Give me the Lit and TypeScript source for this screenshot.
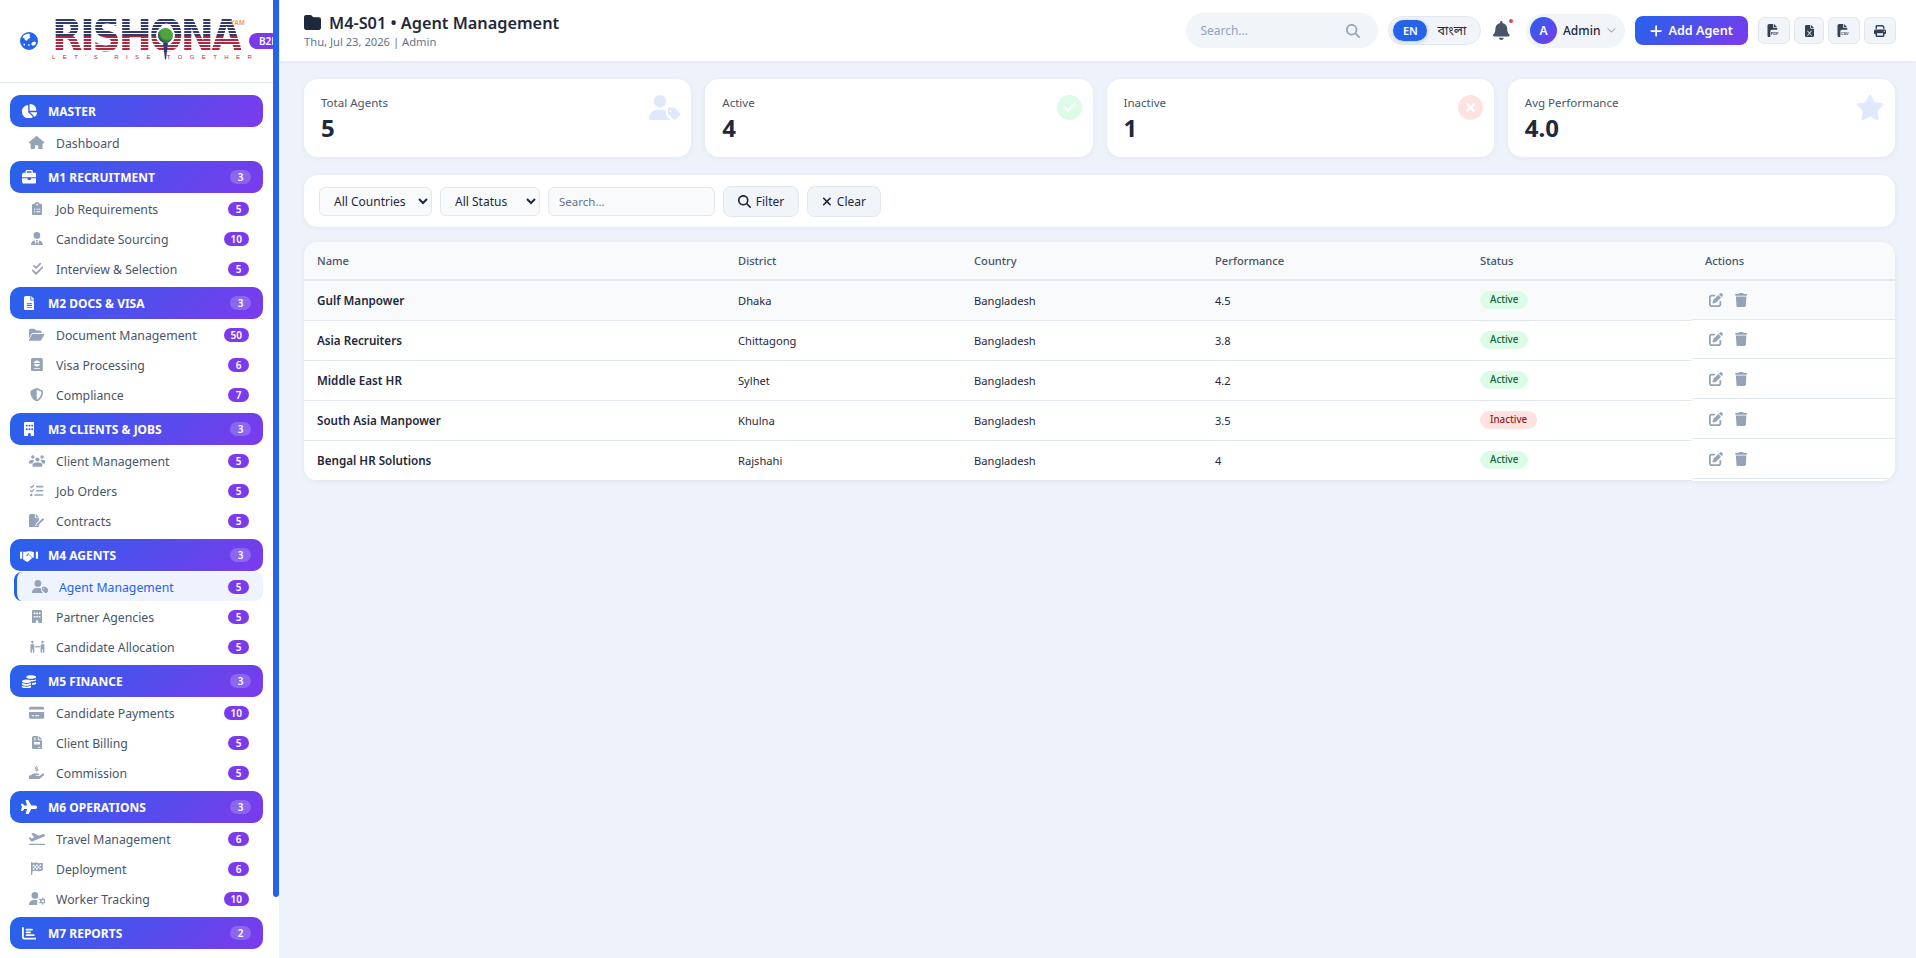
import { LitElement, html, css } from 'lit';
import { customElement } from 'lit/decorators.js';

type Icon = [number, string];

const ICONS: Record<string, Icon> = {
  globe: [512, 'M256 0a256 256 0 1 0 0 512 256 256 0 1 0 0-512zM150 70l90-30 50 30-20 50 30 40-70 40-30 50-60-20-20-60-50 0 20-60 60-40zM340 300l70-30 50 30-30 70-70 20-40-40 20-50zM240 340l40 20-20 40-40-20 20-40zM110 330l40 20-20 40-40-30 20-30z'],
  pie: [576, 'M304 240V16.6c0-9 7-16.6 16-16.6C443.7 0 544 100.3 544 224c0 9-7.6 16-16.6 16H304zM32 272C32 150.7 122.1 50.3 239 34.3c9.2-1.3 17 6.1 17 15.4V288L412.5 444.5c6.7 6.7 6.2 17.7-1.5 23.1C371.8 495.6 323.8 512 272 512C139.5 512 32 404.6 32 272zm526.4 16c9.3 0 16.6 7.8 15.4 17c-7.7 55.9-34.6 105.6-73.9 142.3c-6 5.6-15.4 5.2-21.2-.7L320 288H558.4z'],
  house: [576, 'M575.8 255.5c0 18-15 32.1-32 32.1h-32l.7 160.2c0 2.7-.2 5.4-.5 8.1V472c0 22.1-17.9 40-40 40H456c-1.1 0-2.2 0-3.3-.1c-1.4 .1-2.8 .1-4.2 .1H416 392c-22.1 0-40-17.9-40-40V448 384c0-17.7-14.3-32-32-32H256c-17.7 0-32 14.3-32 32v64 24c0 22.1-17.9 40-40 40H160 128.1c-1.5 0-3-.1-4.5-.2c-1.2 .1-2.4 .2-3.6 .2H104c-22.1 0-40-17.9-40-40V360c0-.9 0-1.9 .1-2.8V287.6H32c-18 0-32-14-32-32.1c0-9 3-17 10-24L266.4 8c7-7 15-8 22-8s15 2 21 7L564.8 231.5c8 7 12 15 11 24z'],
  briefcase: [512, 'M184 48H328c4.4 0 8 3.6 8 8V96H176V56c0-4.4 3.6-8 8-8zm-56 8V96H64C28.7 96 0 124.7 0 160v96H192 320 512V160c0-35.3-28.7-64-64-64H384V56c0-30.9-25.1-56-56-56H184c-30.9 0-56 25.1-56 56zM512 288H320v32c0 17.7-14.3 32-32 32H224c-17.7 0-32-14.3-32-32V288H0V416c0 35.3 28.7 64 64 64H448c35.3 0 64-28.7 64-64V288z'],
  clipboard: [384, 'M192 0c-41.8 0-77.4 26.7-90.5 64H64C28.7 64 0 92.7 0 128V448c0 35.3 28.7 64 64 64H320c35.3 0 64-28.7 64-64V128c0-35.3-28.7-64-64-64H282.5C269.4 26.7 233.8 0 192 0zm0 64a32 32 0 1 1 0 64 32 32 0 1 1 0-64zM72 272a24 24 0 1 1 48 0 24 24 0 1 1 -48 0zm104-16H304c8.8 0 16 7.2 16 16s-7.2 16-16 16H176c-8.8 0-16-7.2-16-16s7.2-16 16-16zM72 368a24 24 0 1 1 48 0 24 24 0 1 1 -48 0zm88 0c0-8.8 7.2-16 16-16H304c8.8 0 16 7.2 16 16s-7.2 16-16 16H176c-8.8 0-16-7.2-16-16z'],
  userTie: [448, 'M96 128a128 128 0 1 0 256 0A128 128 0 1 0 96 128zm94.5 200.2l18.6 31L175.8 483.1l-36-146.9c-2-8.1-9.8-13.4-17.9-11.3C51.9 342.4 0 405.8 0 481.3c0 17 13.8 30.7 30.7 30.7H162.5c0 0 0 0 .1 0H168 280h5.5c0 0 0 0 .1 0H417.3c17 0 30.7-13.8 30.7-30.7c0-75.5-51.9-138.9-121.9-156.4c-8.1-2-15.9 3.3-17.9 11.3l-36 146.9L238.9 359.2l18.6-31c6.4-10.7-1.3-24.2-13.7-24.2H224 204.3c-12.4 0-20.1 13.6-13.7 24.2z'],
  checks: [448, 'M374.6 86.6c12.5-12.5 12.5-32.8 0-45.3s-32.8-12.5-45.3 0L192 178.7l-57.4-57.4c-12.5-12.5-32.8-12.5-45.3 0s-12.5 32.8 0 45.3l80 80c12.5 12.5 32.8 12.5 45.3 0l160-160zm96 128c12.5-12.5 12.5-32.8 0-45.3s-32.8-12.5-45.3 0L192 402.7 86.6 297.4c-12.5-12.5-32.8-12.5-45.3 0s-12.5 32.8 0 45.3l128 128c12.5 12.5 32.8 12.5 45.3 0l256-256z'],
  fileLines: [384, 'M64 0C28.7 0 0 28.7 0 64V448c0 35.3 28.7 64 64 64H320c35.3 0 64-28.7 64-64V160H256c-17.7 0-32-14.3-32-32V0H64zM256 0V128H384L256 0zM112 256H272c8.8 0 16 7.2 16 16s-7.2 16-16 16H112c-8.8 0-16-7.2-16-16s7.2-16 16-16zm0 64H272c8.8 0 16 7.2 16 16s-7.2 16-16 16H112c-8.8 0-16-7.2-16-16s7.2-16 16-16zm0 64H272c8.8 0 16 7.2 16 16s-7.2 16-16 16H112c-8.8 0-16-7.2-16-16s7.2-16 16-16z'],
  folderOpen: [576, 'M88.7 223.8L0 375.8V96C0 60.7 28.7 32 64 32H181.5c17 0 33.3 6.7 45.3 18.7l26.5 26.5c12 12 28.3 18.7 45.3 18.7H416c35.3 0 64 28.7 64 64v32H144c-22.8 0-43.8 12.1-55.3 31.8zm27.6 16.1C122.1 230 132.6 224 144 224H544c11.5 0 22 6.1 27.7 16.1s5.7 22.2-.1 32.1l-112 192C453.9 474 443.4 480 432 480H32c-11.5 0-22-6.1-27.7-16.1s-5.7-22.2 .1-32.1l112-192z'],
  passport: [448, 'M64 0h320c35 0 64 29 64 64v384c0 35-29 64-64 64H64c-35 0-64-29-64-64V64C0 29 29 0 64 0zM224 96a112 112 0 1 0 0 224 112 112 0 1 0 0-224zM120 384c-9 0-16 7-16 16s7 16 16 16h208c9 0 16-7 16-16s-7-16-16-16H120zM116 192h216v32H116z'],
  shield: [512, 'M256 0c4.6 0 9.2 1 13.4 2.9L457.7 82.8c22 9.3 38.4 31 38.3 57.2c-.5 99.2-41.3 280.7-213.6 363.2c-16.7 8-36.1 8-52.8 0C57.3 420.7 16.5 239.2 16 140c-.1-26.2 16.3-47.9 38.3-57.2L242.7 2.9C246.8 1 251.4 0 256 0zm0 66.8V444.8C394 378 431.1 230.1 432 141.4L256 66.8l0 0z'],
  building: [384, 'M48 0C21.5 0 0 21.5 0 48V464c0 26.5 21.5 48 48 48h96V432c0-26.5 21.5-48 48-48s48 21.5 48 48v80h96c26.5 0 48-21.5 48-48V48c0-26.5-21.5-48-48-48H48zM64 240c0-8.8 7.2-16 16-16h32c8.8 0 16 7.2 16 16v32c0 8.8-7.2 16-16 16H80c-8.8 0-16-7.2-16-16V240zm112-16h32c8.8 0 16 7.2 16 16v32c0 8.8-7.2 16-16 16H176c-8.8 0-16-7.2-16-16V240c0-8.8 7.2-16 16-16zm80 16c0-8.8 7.2-16 16-16h32c8.8 0 16 7.2 16 16v32c0 8.8-7.2 16-16 16H272c-8.8 0-16-7.2-16-16V240zM80 96h32c8.8 0 16 7.2 16 16v32c0 8.8-7.2 16-16 16H80c-8.8 0-16-7.2-16-16V112c0-8.8 7.2-16 16-16zm80 16c0-8.8 7.2-16 16-16h32c8.8 0 16 7.2 16 16v32c0 8.8-7.2 16-16 16H176c-8.8 0-16-7.2-16-16V112zM272 96h32c8.8 0 16 7.2 16 16v32c0 8.8-7.2 16-16 16H272c-8.8 0-16-7.2-16-16V112c0-8.8 7.2-16 16-16z'],
  users: [640, 'M144 48a64 64 0 1 1 0 128 64 64 0 1 1 0-128zM496 48a64 64 0 1 1 0 128 64 64 0 1 1 0-128zM320 128a80 80 0 1 1 0 160 80 80 0 1 1 0-160zM0 330c0-60 40-100 90-100h60c20 0 35 5 50 14-40 30-60 70-60 118H20c-11 0-20-9-20-32zM640 330c0 23-9 32-20 32H500c0-48-20-88-60-118 15-9 30-14 50-14h60c50 0 90 40 90 100zM128 448c0-70 50-128 130-128h124c80 0 130 58 130 128 0 18-14 32-32 32H160c-18 0-32-14-32-32z'],
  listCheck: [512, 'M152.1 38.2c9.9 8.9 10.7 24 1.8 33.9l-72 80c-4.4 4.9-10.6 7.8-17.2 7.9s-12.9-2.4-17.6-7L7 113C-2.3 103.6-2.3 88.4 7 79s24.6-9.4 33.9 0l22.1 22.1 55.1-61.2c8.9-9.9 24-10.7 33.9-1.8zm0 160c9.9 8.9 10.7 24 1.8 33.9l-72 80c-4.4 4.9-10.6 7.8-17.2 7.9s-12.9-2.4-17.6-7L7 273c-9.4-9.4-9.4-24.6 0-33.9s24.6-9.4 33.9 0l22.1 22.1 55.1-61.2c8.9-9.9 24-10.7 33.9-1.8zM224 96c0-17.7 14.3-32 32-32H480c17.7 0 32 14.3 32 32s-14.3 32-32 32H256c-17.7 0-32-14.3-32-32zm0 160c0-17.7 14.3-32 32-32H480c17.7 0 32 14.3 32 32s-14.3 32-32 32H256c-17.7 0-32-14.3-32-32zM160 416c0-17.7 14.3-32 32-32H480c17.7 0 32 14.3 32 32s-14.3 32-32 32H192c-17.7 0-32-14.3-32-32zM48 368a48 48 0 1 1 0 96 48 48 0 1 1 0-96z'],
  fileSign: [576, 'M64 0H224V128c0 18 14 32 32 32H384V240L256 368l-16 96 96-16 48-48v48c0 35-29 64-64 64H64c-35 0-64-29-64-64V64C0 29 29 0 64 0zM256 0L384 128H256V0zM560 180c-18-18-46-18-64 0L288 388l-12 60 60-12L548 236l12-12c16-16 16-30 0-44z'],
  handshake: [640, 'M0 136h80v240H0V136zM560 136h80v240h-80V136zM112 136h110l60-24h90l96 32h20v200h-44L304 464l-50 28-36-24-40-8-36-48h-30V136zM290 176l-60 70c-12 14 0 34 20 34l60-40 120 110 12-12-130-120-40 28c-10 6-18-2-12-8l60-62h-30z'],
  userTag: [640, 'M224 0a128 128 0 1 1 0 256 128 128 0 1 1 0-256zM178 304h92c30 0 58 8 82 22v70c0 17 7 33 19 45l71 71H30c-17 0-30-13-30-30 0-98 80-178 178-178zM384 288c0-18 14-32 32-32h86c8 0 16 3 22 9l106 106c12 12 12 33 0 45l-84 84c-12 12-33 12-45 0L395 394c-7-6-11-14-11-22v-84zM440 312a20 20 0 1 0 0 40 20 20 0 1 0 0-40z'],
  peopleArrows: [640, 'M128 32a48 48 0 1 1 0 96 48 48 0 1 1 0-96zM512 32a48 48 0 1 1 0 96 48 48 0 1 1 0-96zM56 160h112c18 0 32 14 32 32v288h-56V352h-32v128H80c-14 0-24-10-24-24V160zM584 160H472c-18 0-32 14-32 32v288h56V352h32v128h32c14 0 24-10 24-24V160zM220 256l60-48v32h80v-32l60 48-60 48v-32h-80v32z'],
  coins: [512, 'M312 40c-80 0-160 24-160 64s80 64 160 64 200-24 200-64-120-64-200-64zM512 170c-30 30-100 46-170 46-30 0-60-3-85-10 30 14 50 34 56 58 80-2 199-24 199-54v-40zM160 192C72 192 0 220 0 256s72 64 160 64 160-28 160-64-72-64-160-64zM0 310v40c0 36 72 64 160 64s160-28 160-64v-40c-30 24-90 40-160 40S30 334 0 310zM0 406v42c0 36 72 64 160 64s160-28 160-64v-42c-30 24-90 40-160 40S30 430 0 406zM352 330v60c70-4 160-24 160-60v-46c-30 24-100 42-160 46z'],
  card: [576, 'M64 32C29 32 0 61 0 96v32h576V96c0-35-29-64-64-64H64zM576 224H0v192c0 35 29 64 64 64h448c35 0 64-29 64-64V224zM112 352h64c9 0 16 7 16 16s-7 16-16 16h-64c-9 0-16-7-16-16s7-16 16-16zm112 16c0-9 7-16 16-16h128c9 0 16 7 16 16s-7 16-16 16H240c-9 0-16-7-16-16z'],
  invoice: [384, 'M64 0C29 0 0 29 0 64v384c0 35 29 64 64 64h256c35 0 64-29 64-64V160H256c-18 0-32-14-32-32V0H64zM256 0v128h128L256 0zM80 64h64c9 0 16 7 16 16s-7 16-16 16H80c-9 0-16-7-16-16s7-16 16-16zm0 64h64c9 0 16 7 16 16s-7 16-16 16H80c-9 0-16-7-16-16s7-16 16-16zM80 224h224v96H80v-96zM240 416h64c9 0 16 7 16 16s-7 16-16 16h-64c-9 0-16-7-16-16s7-16 16-16z'],
  handDollar: [576, 'M0 384c0-18 14-32 32-32h40l46-37c23-18 51-28 80-28h154c18 0 32 14 32 32s-14 32-32 32h-80c-9 0-16 7-16 16s7 16 16 16h121l120-88c18-13 43-9 56 8s9 43-8 56L412 478c-26 19-57 29-89 29H32c-18 0-32-14-32-32v-91zM288 0c-9 0-16 7-16 16v10c-30 5-52 22-52 50 0 34 30 44 56 52 20 6 30 10 30 20 0 8-10 14-24 14-14 0-28-4-42-12l-14 24c14 9 30 14 46 16v10c0 9 7 16 16 16s16-7 16-16v-10c32-5 52-24 52-50 0-36-32-46-58-54-18-6-28-9-28-18 0-6 8-12 22-12 12 0 24 3 36 8l10-26c-10-5-22-8-34-10V16c0-9-7-16-16-16z'],
  plane: [576, 'M482.3 192c34.2 0 93.7 29 93.7 64c0 36-59.5 64-93.7 64l-116.6 0L265.2 495.9c-5.7 10-16.3 16.1-27.8 16.1l-56.2 0c-10.6 0-18.3-10.2-15.4-20.4l49-171.6L112 320 68.8 377.6c-3 4-7.8 6.4-12.8 6.4l-42 0c-7.8 0-14-6.3-14-14c0-1.3 .2-2.6 .5-3.9L32 256 .5 145.9c-.4-1.3-.5-2.6-.5-3.9c0-7.8 6.3-14 14-14l42 0c5 0 9.8 2.4 12.8 6.4L112 192l102.9 0-49-171.6C162.9 10.2 170.6 0 181.2 0l56.2 0c11.5 0 22.1 6.2 27.8 16.1L365.7 192l116.6 0z'],
  planeUp: [640, 'M372 144L173 40c-8-4-17-5-26-2l-41 15c-10 4-14 16-7 25l101 128-100 37-60-37c-6-4-14-4-21-2l-16 6c-9 3-13 14-8 23l54 92c15 27 48 38 77 28l13-5L560 180c30-11 50-40 40-70s-45-40-75-29L372 144zM32 448c-18 0-32 14-32 32s14 32 32 32H608c18 0 32-14 32-32s-14-32-32-32H32z'],
  flag: [448, 'M32 0c18 0 32 14 32 32v16l70-20c40-10 80-8 120 8 36 14 76 16 114 6l60-15c11-3 20 5 20 16v256c0 8-5 15-12 18l-68 25c-40 14-84 14-124 0-36-14-76-16-112-6l-80 21v127c0 18-14 32-32 32S0 498 0 480V32C0 14 14 0 32 0zM64 112v64l64-14V98L64 112zM192 88v66l64 14V104L192 88zM128 162v64l64-10v-62L128 162zM256 168v64l64-4v-64L256 168zM320 100v64l64-16V84L320 100zM64 240v62l64-16v-60L64 240zM192 216v64l64 14v-62L192 216zM320 228v60l64-20v-56L320 228z'],
  userGear: [640, 'M224 0a128 128 0 1 1 0 256 128 128 0 1 1 0-256zM178 304h92c14 0 28 2 42 5-12 30-8 70 8 96-18 30-16 72 8 107H30c-17 0-30-13-30-30 0-98 80-178 178-178zM500 208l40 0 10 44 38 22 44-14 20 34-34 30v44l34 30-20 34-44-14-38 22-10 44h-40l-10-44-38-22-44 14-20-34 34-30v-44l-34-30 20-34 44 14 38-22 10-44zM520 300a50 50 0 1 0 0 100 50 50 0 1 0 0-100z'],
  chartBar: [512, 'M32 32c18 0 32 14 32 32v336c0 9 7 16 16 16h400c18 0 32 14 32 32s-14 32-32 32H80c-44 0-80-36-80-80V64c0-18 14-32 32-32zM128 128c0-18 14-32 32-32h192c18 0 32 14 32 32s-14 32-32 32H160c-18 0-32-14-32-32zM160 192h128c18 0 32 14 32 32s-14 32-32 32H160c-18 0-32-14-32-32s14-32 32-32zM160 288h256c18 0 32 14 32 32s-14 32-32 32H160c-18 0-32-14-32-32s14-32 32-32z'],
  folder: [512, 'M64 480H448c35.3 0 64-28.7 64-64V160c0-35.3-28.7-64-64-64H288c-10.1 0-19.6-4.7-25.6-12.8L243.2 57.6C231.1 41.5 212.1 32 192 32H64C28.7 32 0 60.7 0 96V416c0 35.3 28.7 64 64 64z'],
  search: [512, 'M416 208c0 45.9-14.9 88.3-40 122.7L502.6 457.4c12.5 12.5 12.5 32.8 0 45.3s-32.8 12.5-45.3 0L330.7 376c-34.4 25.2-76.8 40-122.7 40C93.1 416 0 322.9 0 208S93.1 0 208 0S416 93.1 416 208zM208 352a144 144 0 1 0 0-288 144 144 0 1 0 0 288z'],
  xmark: [384, 'M342.6 150.6c12.5-12.5 12.5-32.8 0-45.3s-32.8-12.5-45.3 0L192 210.7 86.6 105.4c-12.5-12.5-32.8-12.5-45.3 0s-12.5 32.8 0 45.3L146.7 256 41.4 361.4c-12.5 12.5-12.5 32.8 0 45.3s32.8 12.5 45.3 0L192 301.3 297.4 406.6c12.5 12.5 32.8 12.5 45.3 0s12.5-32.8 0-45.3L237.3 256 342.6 150.6z'],
  plus: [448, 'M256 80c0-17.7-14.3-32-32-32s-32 14.3-32 32V224H48c-17.7 0-32 14.3-32 32s14.3 32 32 32H192V432c0 17.7 14.3 32 32 32s32-14.3 32-32V288H400c17.7 0 32-14.3 32-32s-14.3-32-32-32H256V80z'],
  bell: [448, 'M224 0c-17.7 0-32 14.3-32 32V51.2C119 66 64 130.6 64 208v18.8c0 47-17.3 92.4-48.5 127.6l-7.4 8.3c-8.4 9.4-10.4 22.9-5.3 34.4S19.4 416 32 416H416c12.6 0 24-7.4 29.2-18.9s3.1-25-5.3-34.4l-7.4-8.3C401.3 319.2 384 273.9 384 226.8V208c0-77.4-55-142-128-156.8V32c0-17.7-14.3-32-32-32zm45.3 493.3c12-12 18.7-28.3 18.7-45.3H224 160c0 17 6.7 33.3 18.7 45.3s28.3 18.7 45.3 18.7s33.3-6.7 45.3-18.7z'],
  trash: [448, 'M135.2 17.7L128 32H32C14.3 32 0 46.3 0 64S14.3 96 32 96H416c17.7 0 32-14.3 32-32s-14.3-32-32-32H320l-7.2-14.3C307.4 6.8 296.3 0 284.2 0H163.8c-12.1 0-23.2 6.8-28.6 17.7zM416 128H32L53.2 467c1.6 25.3 22.6 45 47.9 45H346.9c25.3 0 46.3-19.7 47.9-45L416 128z'],
  edit: [512, 'M471.6 21.7c-21.9-21.9-57.3-21.9-79.2 0L362.3 51.7l97.9 97.9 30.1-30.1c21.9-21.9 21.9-57.3 0-79.2L471.6 21.7zm-299.2 220c-6.1 6.1-10.8 13.6-13.5 21.9l-29.6 88.8c-2.9 8.6-.6 18.1 5.8 24.6s15.9 8.7 24.6 5.8l88.8-29.6c8.2-2.7 15.7-7.4 21.9-13.5L437.7 172.3 339.7 74.3 172.4 241.7zM96 64C43 64 0 107 0 160V416c0 53 43 96 96 96H352c53 0 96-43 96-96V320c0-17.7-14.3-32-32-32s-32 14.3-32 32v96c0 17.7-14.3 32-32 32H96c-17.7 0-32-14.3-32-32V160c0-17.7 14.3-32 32-32h96c17.7 0 32-14.3 32-32s-14.3-32-32-32H96z'],
  star: [576, 'M316.9 18C311.6 7 300.4 0 288.1 0s-23.4 7-28.8 18L195 150.3 51.4 171.5c-12 1.8-22 10.2-25.7 21.7s-.7 24.2 7.9 32.7L137.8 329 113.2 474.7c-2 12 3 24.2 12.9 31.3s23 8 33.8 2.3l128.3-68.5 128.3 68.5c10.8 5.7 23.9 4.9 33.8-2.3s14.9-19.3 12.9-31.3L438.5 329 542.7 225.9c8.6-8.5 11.7-21.2 7.9-32.7s-13.7-19.9-25.7-21.7L381.2 150.3 316.9 18z'],
  circleCheck: [512, 'M256 512A256 256 0 1 0 256 0a256 256 0 1 0 0 512zM369 209L241 337c-9.4 9.4-24.6 9.4-33.9 0l-64-64c-9.4-9.4-9.4-24.6 0-33.9s24.6-9.4 33.9 0l47 47L335 175c9.4-9.4 24.6-9.4 33.9 0s9.4 24.6 0 33.9z'],
  circleX: [512, 'M256 512A256 256 0 1 0 256 0a256 256 0 1 0 0 512zM175 175c9.4-9.4 24.6-9.4 33.9 0l47 47 47-47c9.4-9.4 24.6-9.4 33.9 0s9.4 24.6 0 33.9l-47 47 47 47c9.4 9.4 9.4 24.6 0 33.9s-24.6 9.4-33.9 0l-47-47-47 47c-9.4 9.4-24.6 9.4-33.9 0s-9.4-24.6 0-33.9l47-47-47-47c-9.4-9.4-9.4-24.6 0-33.9z'],
  print: [512, 'M128 0C92.7 0 64 28.7 64 64v96h64V64H354.7L384 93.3V160h64V93.3c0-17-6.7-33.3-18.7-45.3L400 18.7C388 6.7 371.7 0 354.7 0H128zM384 352v32 64H128V384 368 352H384zm64 32h32c17.7 0 32-14.3 32-32V256c0-35.3-28.7-64-64-64H64c-35.3 0-64 28.7-64 64v96c0 17.7 14.3 32 32 32H64v64c0 35.3 28.7 64 64 64H384c35.3 0 64-28.7 64-64V384zM432 248a24 24 0 1 1 0 48 24 24 0 1 1 0-48z'],
  chevron: [512, 'M256 360L60 164l28-28 168 168 168-168 28 28z'],
  fileTop: [512, 'M0 64C0 29 29 0 64 0H224V128c0 18 14 32 32 32H384V224H176c-35 0-64 29-64 64V512H64c-35 0-64-29-64-64V64zM384 128H256V0L384 128z'],
  fileX: [384, 'M64 0C29 0 0 29 0 64v384c0 35 29 64 64 64h256c35 0 64-29 64-64V160H256c-18 0-32-14-32-32V0H64zM256 0v128h128L256 0zM120 240l72 84 72-84h40l-92 108 92 108h-40l-72-84-72 84H80l92-108L80 240h40z'],
};

function icon(name: string, cls = '') {
  const [w, d] = ICONS[name];
  return html`<svg class="ic ${cls}" viewBox="0 0 ${w} 512" fill="currentColor" fill-rule="evenodd"><path d=${d}></path></svg>`;
}

const NAV = [
  { icon: 'pie', title: 'MASTER', items: [['house', 'Dashboard', '']] },
  { icon: 'briefcase', title: 'M1 RECRUITMENT', count: 3, items: [['clipboard', 'Job Requirements', '5'], ['userTie', 'Candidate Sourcing', '10'], ['checks', 'Interview & Selection', '5']] },
  { icon: 'fileLines', title: 'M2 DOCS & VISA', count: 3, items: [['folderOpen', 'Document Management', '50'], ['passport', 'Visa Processing', '6'], ['shield', 'Compliance', '7']] },
  { icon: 'building', title: 'M3 CLIENTS & JOBS', count: 3, items: [['users', 'Client Management', '5'], ['listCheck', 'Job Orders', '5'], ['fileSign', 'Contracts', '5']] },
  { icon: 'handshake', title: 'M4 AGENTS', count: 3, items: [['userTag', 'Agent Management', '5'], ['building', 'Partner Agencies', '5'], ['peopleArrows', 'Candidate Allocation', '5']] },
  { icon: 'coins', title: 'M5 FINANCE', count: 3, items: [['card', 'Candidate Payments', '10'], ['invoice', 'Client Billing', '5'], ['handDollar', 'Commission', '5']] },
  { icon: 'plane', title: 'M6 OPERATIONS', count: 3, items: [['planeUp', 'Travel Management', '6'], ['flag', 'Deployment', '6'], ['userGear', 'Worker Tracking', '10']] },
  { icon: 'chartBar', title: 'M7 REPORTS', count: 2, items: [] },
];

const STATS = [
  { label: 'Total Agents', value: '5', icon: 'userTag', tone: 'blue' },
  { label: 'Active', value: '4', icon: 'circleCheck', tone: 'green' },
  { label: 'Inactive', value: '1', icon: 'circleX', tone: 'red' },
  { label: 'Avg Performance', value: '4.0', icon: 'star', tone: 'blue' },
];

const AGENTS = [
  ['Gulf Manpower', 'Dhaka', 'Bangladesh', '4.5', 'Active'],
  ['Asia Recruiters', 'Chittagong', 'Bangladesh', '3.8', 'Active'],
  ['Middle East HR', 'Sylhet', 'Bangladesh', '4.2', 'Active'],
  ['South Asia Manpower', 'Khulna', 'Bangladesh', '3.5', 'Inactive'],
  ['Bengal HR Solutions', 'Rajshahi', 'Bangladesh', '4', 'Active'],
];

@customElement('app-root')
export class AppRoot extends LitElement {
  static styles = css`
    :host {
      display: flex;
      height: 100vh;
      overflow: hidden;
      background: #eef2fb;
      color: #1e293b;
      font-family: 'Noto Sans', sans-serif;
      font-size: 13px;
    }
    * { box-sizing: border-box; }
    .ic { display: block; height: 1em; width: auto; flex: none; }

    /* sidebar */
    .sidebar {
      position: relative;
      width: 279px;
      flex: none;
      height: 100%;
      background: #fff;
      overflow: hidden;
    }
    /* the page's own scrollbar thumb, the headless shot does not paint one */
    .thumb {
      position: absolute;
      top: 0;
      right: 0;
      width: 6px;
      height: 897px;
      border-radius: 0 0 3px 3px;
      background: #2563eb;
    }
    .brand {
      display: flex;
      align-items: center;
      width: 273px;
      height: 83px;
      padding-left: 20px;
      border-bottom: 1px solid #e2e8f0;
      overflow: hidden;
    }
    .brand-globe { font-size: 18px; color: #2563eb; margin-right: 14px; }
    .logo { position: relative; width: 190px; height: 44px; flex: none; margin-top: -1px; }
    .logo-name {
      width: 208px;
      transform: scaleX(0.91);
      transform-origin: left top;
      font-family: 'DejaVu Sans', sans-serif;
      font-weight: 700;
      font-size: 44px;
      line-height: 33px;
      height: 33px;
      letter-spacing: -3px;
      white-space: nowrap;
      color: transparent;
      background: repeating-linear-gradient(#2f3a6e 0 2px, #fff 2px 3px) top / 100% 17px no-repeat,
        repeating-linear-gradient(#ab2a41 0 2px, #fff 2px 3px) bottom / 100% 16px no-repeat;
      -webkit-background-clip: text;
      background-clip: text;
    }
    .logo-tag {
      font-family: 'Liberation Sans', sans-serif;
      font-size: 6px;
      line-height: 7px;
      margin-top: 2px;
      letter-spacing: 7.4px;
      white-space: nowrap;
      color: #a8384a;
    }
    .logo-mark {
      position: absolute;
      left: 106px;
      top: 9px;
      width: 15px;
      height: 15px;
      border-radius: 50%;
      background: radial-gradient(circle at 60% 35%, #4fa53a 0 45%, #1f4f5f 70%);
      box-shadow: 0 0 0 2px #fff;
    }
    .logo-mark::after {
      content: '';
      position: absolute;
      left: 5px;
      top: 15px;
      width: 5px;
      height: 17px;
      background: #2f3a6e;
      clip-path: polygon(0 0, 100% 0, 60% 100%, 40% 100%);
    }
    .logo-tm {
      position: absolute;
      left: 178px;
      top: 0;
      font-family: 'Liberation Sans', sans-serif;
      font-size: 7px;
      font-weight: 700;
      line-height: 7px;
      color: #f0a060;
    }
    .brand-badge {
      flex: none;
      margin-left: 7px;
      width: 30px;
      height: 16px;
      padding-left: 10px;
      border-radius: 8px;
      background: #7c3aed;
      color: #fff;
      font-size: 10px;
      font-weight: 600;
      line-height: 16px;
      white-space: nowrap;
    }
    nav { padding: 12px 10px 0 10px; width: 273px; }
    .group { margin-bottom: 4px; }
    .group-head {
      display: flex;
      align-items: center;
      height: 32px;
      margin-bottom: 1px;
      padding: 0 12px 0 10px;
      border-radius: 10px;
      background: linear-gradient(135deg, #2563eb, #7c3aed);
      color: #fff;
      font-weight: 700;
      font-size: 12px;
    }
    .group-icon { width: 18px; display: flex; justify-content: center; font-size: 14.5px; margin-right: 10px; }
    .group-title { flex: 1; white-space: nowrap; }
    .group-count {
      width: 21px;
      height: 14px;
      border-radius: 7px;
      background: rgba(255, 255, 255, 0.2);
      font-size: 10px;
      font-weight: 600;
      line-height: 14px;
      text-align: center;
    }
    .item {
      display: flex;
      align-items: center;
      height: 29px;
      margin: 0 0 1px 4px;
      padding: 0 14px 0 15px;
      border-radius: 8px;
      color: #475569;
      font-size: 12.25px;
    }
    .item.active {
      background: #eff3fe;
      color: #2563eb;
      border-left: 3px solid #2563eb;
    }
    .item-icon { width: 16px; display: flex; justify-content: center; font-size: 13.5px; margin-right: 11px; color: #94a3b8; }
    .item-label { flex: 1; white-space: nowrap; padding-top: 1px; }
    .item-badge {
      min-width: 21px;
      height: 14px;
      padding: 0 7px;
      border-radius: 7px;
      background: #7c3aed;
      color: #fff;
      font-size: 10px;
      font-weight: 600;
      line-height: 14px;
      text-align: center;
    }

    /* main */
    .main { flex: 1; min-width: 0; display: flex; flex-direction: column; }
    .topbar {
      display: flex;
      align-items: center;
      height: 61px;
      margin-left: 1px;
      padding: 0 20px 0 24px;
      background: #fff;
      box-shadow: 0 1px 4px rgba(15, 23, 42, 0.05);
    }
    .heading { flex: 1; }
    .title { display: flex; align-items: center; gap: 8px; font-size: 16.3px; font-weight: 600; line-height: 22px; color: #1e293b; }
    .title .ic { font-size: 17px; }
    .subtitle { font-size: 11.2px; line-height: 16px; color: #64748b; }
    .top-search {
      display: flex;
      align-items: center;
      justify-content: space-between;
      width: 192px;
      height: 35px;
      padding: 0 18px 0 14px;
      border-radius: 18px;
      background: #f1f5f9;
      color: #94a3b8;
      font-size: 12px;
    }
    .top-search .ic { font-size: 14px; }
    .lang {
      display: flex;
      align-items: center;
      width: 93px;
      height: 29px;
      margin-left: 10px;
      padding: 0 4px;
      border: 1px solid #e2e8f0;
      border-radius: 15px;
      background: #f1f5f9;
      font-size: 11px;
    }
    .lang-on {
      width: 34px;
      height: 21px;
      border-radius: 11px;
      background: #2563eb;
      color: #fff;
      font-weight: 600;
      line-height: 21px;
      text-align: center;
      box-shadow: 0 1px 4px rgba(37, 99, 235, 0.3);
    }
    .lang-off { flex: 1; text-align: center; color: #1e293b; font-size: 12.5px; font-family: 'Noto Sans', 'Noto Sans Bengali', 'DejaVu Sans', sans-serif; }
    .bell { position: relative; margin-left: 12px; font-size: 19px; color: #475569; }
    .bell-dot {
      position: absolute;
      top: -2px;
      right: -3px;
      width: 4px;
      height: 4px;
      border-radius: 50%;
      background: #ef4444;
    }
    .account {
      display: flex;
      align-items: center;
      width: 99px;
      height: 34px;
      margin-left: 16px;
      padding-left: 4px;
      border-radius: 17px;
      background: #f1f5f9;
      font-size: 12px;
      font-weight: 500;
    }
    .avatar {
      width: 27px;
      height: 27px;
      margin-right: 6px;
      border-radius: 50%;
      background: linear-gradient(135deg, #2563eb, #7c3aed);
      color: #fff;
      font-weight: 600;
      line-height: 27px;
      text-align: center;
    }
    .account .ic { font-size: 11px; margin-left: 6px; color: #94a3b8; }
    .add-btn {
      display: flex;
      align-items: center;
      justify-content: center;
      gap: 6px;
      width: 113px;
      height: 29px;
      margin-left: 10px;
      border-radius: 8px;
      background: linear-gradient(135deg, #2563eb, #7c3aed);
      color: #fff;
      font-size: 12.6px;
      font-weight: 600;
    }
    .add-btn .ic { font-size: 14px; }
    .exports { display: flex; gap: 4px; margin-left: 10px; }
    .export {
      display: flex;
      align-items: center;
      justify-content: center;
      width: 32px;
      height: 27px;
      border: 1px solid #e2e8f0;
      border-radius: 6px;
      background: #f1f5f9;
      color: #334155;
      font-size: 12px;
    }
    .export.narrow { width: 30px; }
    .export svg.file { display: block; width: 14px; height: 13px; }
    .file text { font-family: 'Liberation Sans', sans-serif; font-weight: 700; font-size: 150px; }

    .content { display: flex; flex-direction: column; padding: 18px 21px 0 25px; }
    .stats { display: grid; grid-template-columns: repeat(4, 1fr); gap: 14px; margin-bottom: 18px; }
    .stat {
      position: relative;
      height: 78px;
      padding: 15px 17px;
      border-radius: 14px;
      background: #fff;
      box-shadow: 0 1px 6px rgba(15, 23, 42, 0.05);
    }
    .stat-label { font-size: 11.55px; line-height: 17px; color: #475569; }
    .stat-value { font-size: 24px; font-weight: 700; line-height: 33px; color: #1e293b; }
    .stat-icon { position: absolute; top: 16px; right: 11px; font-size: 25px; }
    .tone-blue { color: #e0e8fb; }
    .tone-green { color: #dcfce7; }
    .tone-red { color: #fee2e2; }

    .filters {
      display: flex;
      align-items: center;
      gap: 8px;
      height: 52px;
      margin-bottom: 15px;
      padding: 0 15px;
      border-radius: 14px;
      background: #fff;
      box-shadow: 0 1px 6px rgba(15, 23, 42, 0.05);
    }
    select, .filter-input {
      height: 29px;
      border: 1px solid #e2e8f0;
      border-radius: 6px;
      background: #f8fafc;
      color: #1e293b;
      font-family: inherit;
      font-size: 12px;
    }
    select { padding: 0 8px 0 10px; }
    .sel-country { width: 113px; }
    .sel-status { width: 100px; }
    .filter-input { width: 167px; padding: 0 10px; outline: none; font-size: 11.5px; }
    .filter-input::placeholder { color: #64748b; }
    .filter-btn {
      display: flex;
      align-items: center;
      justify-content: center;
      gap: 5px;
      height: 31px;
      border: 1px solid #e2e8f0;
      border-radius: 8px;
      background: #f1f5f9;
      color: #1e293b;
      font-family: inherit;
      font-size: 12px;
    }
    .filter-btn .ic { font-size: 13px; }
    .btn-filter { width: 76px; }
    .btn-clear { width: 74px; }

    .table-card {
      border-radius: 14px;
      background: #fff;
      overflow: hidden;
      box-shadow: 0 1px 6px rgba(15, 23, 42, 0.05);
    }
    table { width: 100%; border-collapse: collapse; table-layout: fixed; font-size: 11.15px; }
    th {
      height: 38px;
      padding: 0 13px;
      border-bottom: 2px solid #e2e8f0;
      background: #f8fafc;
      color: #475569;
      font-weight: 500;
      text-align: left;
    }
    td { height: 40px; padding: 0 13px; border-bottom: 1px solid #e2e8f0; color: #1e293b; }
    tr.hover td { background: #f8fafc; }
    .c-name { width: 421px; }
    .c-district { width: 236px; }
    .c-country { width: 241px; }
    .c-perf { width: 265px; }
    .c-status { width: 225px; }
    td.agent { font-weight: 600; font-size: 11.65px; }
    .pill {
      display: inline-block;
      height: 18px;
      padding: 0 10px;
      border-radius: 9px;
      font-size: 9.8px;
      font-weight: 500;
      line-height: 18px;
    }
    .pill-active { background: #dcfce7; color: #166534; }
    .pill-inactive { background: #fee2e2; color: #991b1b; }
    td.actions { display: flex; align-items: center; gap: 12px; height: 39px; padding-left: 17px; }
    .actions .ic { font-size: 14px; color: #94a3b8; }
  `;

  renderNav() {
    return NAV.map(g => html`
      <div class="group">
        <div class="group-head">
          <span class="group-icon">${icon(g.icon)}</span>
          <span class="group-title">${g.title}</span>
          ${g.count ? html`<span class="group-count">${g.count}</span>` : ''}
        </div>
        ${g.items.map(([ic, label, n]) => html`
          <div class="item ${label === 'Agent Management' ? 'active' : ''}">
            <span class="item-icon">${icon(ic)}</span>
            <span class="item-label">${label}</span>
            ${n ? html`<span class="item-badge">${n}</span>` : ''}
          </div>
        `)}
      </div>
    `);
  }

  renderExport(label: string) {
    return html`
      <span class="export">
        <svg class="file" viewBox="0 0 512 512" fill="currentColor">
          <path d=${ICONS.fileTop[1]}></path>
          <text x="130" y="440">${label}</text>
        </svg>
      </span>
    `;
  }

  render() {
    return html`
      <aside class="sidebar">
        <div class="brand">
          <span class="brand-globe">${icon('globe')}</span>
          <div class="logo">
            <div class="logo-name">RISHONA</div>
            <div class="logo-tag">LET'S RISE TOGETHER</div>
            <span class="logo-mark"></span>
            <span class="logo-tm">YAM</span>
          </div>
          <span class="brand-badge">B2B</span>
        </div>
        <nav>${this.renderNav()}</nav>
        <span class="thumb"></span>
      </aside>
      <div class="main">
        <header class="topbar">
          <div class="heading">
            <div class="title">${icon('folder')} M4-S01 • Agent Management</div>
            <div class="subtitle">Thu, Jul 23, 2026 | Admin</div>
          </div>
          <div class="top-search"><span>Search...</span>${icon('search')}</div>
          <div class="lang"><span class="lang-on">EN</span><span class="lang-off">বাংলা</span></div>
          <span class="bell">${icon('bell')}<span class="bell-dot"></span></span>
          <div class="account"><span class="avatar">A</span>Admin${icon('chevron')}</div>
          <div class="add-btn">${icon('plus')} Add Agent</div>
          <div class="exports">
            ${this.renderExport('PDF')}
            <span class="export narrow">${icon('fileX')}</span>
            ${this.renderExport('CSV')}
            <span class="export">${icon('print')}</span>
          </div>
        </header>
        <div class="content">
          <section class="stats">
            ${STATS.map(s => html`
              <div class="stat">
                <div class="stat-label">${s.label}</div>
                <div class="stat-value">${s.value}</div>
                <span class="stat-icon tone-${s.tone}">${icon(s.icon)}</span>
              </div>
            `)}
          </section>
          <section class="filters">
            <select class="sel-country"><option>All Countries</option></select>
            <select class="sel-status"><option>All Status</option></select>
            <input class="filter-input" placeholder="Search..." />
            <button class="filter-btn btn-filter">${icon('search')} Filter</button>
            <button class="filter-btn btn-clear">${icon('xmark')} Clear</button>
          </section>
          <section class="table-card">
            <table>
              <thead>
                <tr>
                  <th class="c-name">Name</th>
                  <th class="c-district">District</th>
                  <th class="c-country">Country</th>
                  <th class="c-perf">Performance</th>
                  <th class="c-status">Status</th>
                  <th>Actions</th>
                </tr>
              </thead>
              <tbody>
                ${AGENTS.map(([name, district, country, perf, status], i) => html`
                  <tr class="${i === 0 ? 'hover' : ''}">
                    <td class="agent">${name}</td>
                    <td>${district}</td>
                    <td>${country}</td>
                    <td>${perf}</td>
                    <td><span class="pill pill-${status.toLowerCase()}">${status}</span></td>
                    <td class="actions">${icon('edit')}${icon('trash')}</td>
                  </tr>
                `)}
              </tbody>
            </table>
          </section>
        </div>
      </div>
    `;
  }
}
